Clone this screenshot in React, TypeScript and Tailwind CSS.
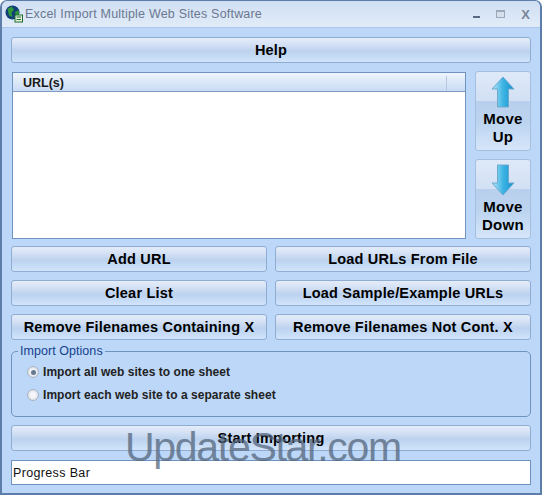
const font = "font-['Liberation_Sans',Arial,sans-serif]";
const btnBg = "bg-[linear-gradient(to_bottom,#e4ecf9_0%,#d6e2f5_25%,#bcd2ee_55%,#c4daf5_75%,#d2e4fa_100%)]";

function Btn({ label, className = "" }: { label: string; className?: string }) {
  return (
    <div className={`h-[26px] flex items-center justify-center pt-[1px] rounded-[3px] border border-[#8fadd3] ${btnBg} text-[14.5px] font-bold text-black tracking-[0.2px] ${className}`}>
      {label}
    </div>
  );
}

function Arrow({ down }: { down?: boolean }) {
  return (
    <svg width="24" height="32" viewBox="0 0 24 32" className={down ? "rotate-180" : ""}>
      <defs>
        <linearGradient id={down ? "ad" : "au"} x1={down ? "1" : "0"} x2={down ? "0" : "1"} y1="0" y2="0">
          <stop offset="0" stopColor="#b5e6f6" />
          <stop offset="0.5" stopColor="#3db4e4" />
          <stop offset="1" stopColor="#1590cf" />
        </linearGradient>
      </defs>
      <path d="M12 1 L23 13 H17.5 V31 H6.5 V13 H1 Z" fill={`url(#${down ? "ad" : "au"})`} stroke="#6ea9cc" strokeWidth="1" />
    </svg>
  );
}

function MoveBtn({ l1, l2, down }: { l1: string; l2: string; down?: boolean }) {
  return (
    <div className="relative h-[80px] w-[56px] rounded-[3px] border border-[#a3bedf] bg-[linear-gradient(to_bottom,#dfe9f8_0%,#d2e0f4_37%,#b8d0ed_37%,#bcd4f0_65%,#d6e6fa_100%)] flex flex-col items-center pt-[4px] text-[15px] leading-[18px] font-bold text-black">
      <Arrow down={down} />
      <span className="mt-[2px] tracking-[0.3px]">{l1}</span>
      <span className="tracking-[0.3px]">{l2}</span>
    </div>
  );
}

function Radio({ on, label }: { on?: boolean; label: string }) {
  return (
    <div className="flex items-center h-[16px] gap-[4px]">
      <span className="w-[12px] h-[12px] rounded-full border border-[#a9b4c4] bg-[radial-gradient(circle,#f4f6f9_30%,#cfd6df_100%)] flex items-center justify-center">
        {on && <span className="w-[5px] h-[5px] rounded-full bg-[#68788f]" />}
      </span>
      <span className="text-[12px] font-bold text-[#222] tracking-[0.05px]">{label}</span>
    </div>
  );
}

export default function App() {
  return (
    <div className={`relative w-[542px] h-[495px] overflow-hidden rounded-t-[7px] border-x-[2px] border-b-[2px] border-t border-[#5d7ea8] bg-[#bcd7f8] ${font}`}>
      {/* title bar */}
      <div className="h-[27px] flex items-center bg-[linear-gradient(to_bottom,#cfdff3,#e2ecf8)] border-b border-[#a9c8ec] pl-[3px] pr-[10px]">
        <svg width="18" height="18" viewBox="0 0 18 18" className="shrink-0">
          <circle cx="7.5" cy="7.5" r="7" fill="#123f78" />
          <path d="M2.5 4 L6.5 1.5 L9 4.5 L6.5 8 L7.5 12 L4 10.5 Z M10 7 L13.5 5 L14 9 L11 12 Z" fill="#2f9a3a" />
          <rect x="10" y="10" width="7.5" height="7" fill="#e8f3dc" stroke="#1a6b2c" />
          <path d="M11.5 12 H16 M11.5 14.5 H16" stroke="#1a6b2c" />
        </svg>
        <span className="ml-[2px] text-[12.5px] text-[#6b7890] tracking-[0.2px]">Excel Import Multiple Web Sites Software</span>
        <div className="ml-auto flex items-center gap-[16px]">
          <span className="w-[7px] h-[2px] mt-[6px] bg-[#5a6a80]" />
          <span className="w-[9px] h-[8px] border border-[#9aa8ba] border-t-[2px] bg-[#d5dfeb]" />
          <span className="text-[13px] font-bold text-[#7a8798] leading-none">X</span>
        </div>
      </div>

      <div className="flex flex-col pl-[9px] pr-[9px] pt-[9px]">
        <Btn label="Help" />

        <div className="flex mt-[8px] gap-[9px]">
          <div className="w-[455px] h-[167px] ml-[1px] mt-[1px] border border-[#6f93bf] bg-white">
            <div className="h-[19px] flex items-center pt-[2px] border-b border-[#7d9cc2] bg-[linear-gradient(to_bottom,#eef4fc,#c9dcf4)] text-[12.5px] font-bold text-[#1a1a1a]">
              <span className="ml-[10px] flex-1">URL(s)</span>
              <span className="w-px h-[15px] bg-[#b4c8e2] mr-[18px]" />
            </div>
          </div>
          <div className="flex flex-col gap-[8px]">
            <MoveBtn l1="Move" l2="Up" />
            <MoveBtn l1="Move" l2="Down" down />
          </div>
        </div>

        <div className="grid grid-cols-2 gap-x-[8px] gap-y-[8px] mt-[7px]">
          <Btn label="Add URL" />
          <Btn label="Load URLs From File" />
          <Btn label="Clear List" />
          <Btn label="Load Sample/Example URLs" />
          <Btn label="Remove Filenames Containing X" />
          <Btn label="Remove Filenames Not Cont. X" />
        </div>

        <div className="relative mt-[11px] h-[66px] rounded-[5px] border border-[#6f93bf] pl-[15px] pt-[12px] flex flex-col gap-[7px]">
          <span className="absolute left-[6px] top-[-8px] px-[2px] bg-[#bcd7f8] text-[12.5px] leading-[14px] text-[#15428b] tracking-[0.05px]">Import Options</span>
          <Radio on label="Import all web sites to one sheet" />
          <Radio label="Import each web site to a separate sheet" />
        </div>

        <Btn label="Start Importing" className="mt-[8px]" />

        <div className="mt-[9px] h-[25px] border border-[#6f93bf] bg-white flex items-center pl-[1px] pt-[1px] text-[12.5px] text-[#111] tracking-[0.35px]">
          Progress Bar
        </div>
      </div>

      <span className="absolute left-[123px] top-[421px] text-[41px] leading-[50px] text-[#54667c] opacity-75 tracking-[-1.3px] pointer-events-none">UpdateStar.com</span>
    </div>
  );
}
